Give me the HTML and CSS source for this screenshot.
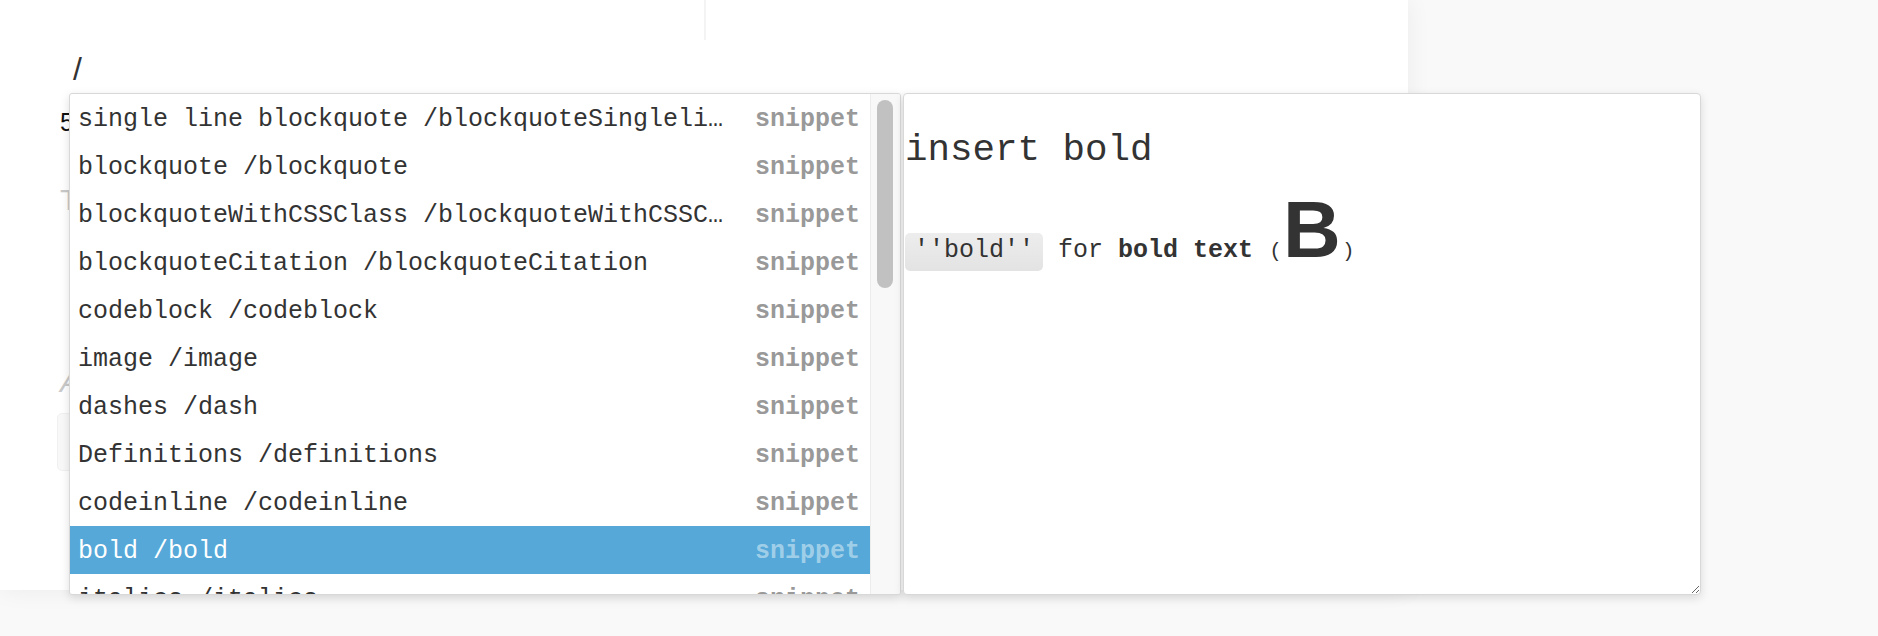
FILE: index.html
```html
<!DOCTYPE html>
<html lang="en">
<head>
<meta charset="utf-8">
<title>Snippet autocomplete</title>
<link rel="stylesheet" href="styles.css">
</head>
<body>
<div class="page">
  <div class="topbar">
    <div class="topbar-left"></div>
    <div class="topbar-right"></div>
  </div>
  <div class="editor">
    <div class="ed-slash">/</div>
    <div class="ed-num">5</div>
    <div class="ed-hint">T</div>
    <div class="ed-hint ed-italic">A</div>
    <div class="ed-box"></div>
  </div>

  <div class="popup">
    <div class="list">
      <div class="rows">
        <div class="row"><span class="name">single line blockquote /blockquoteSingleline</span><span class="kind">snippet</span></div>
        <div class="row"><span class="name">blockquote /blockquote</span><span class="kind">snippet</span></div>
        <div class="row"><span class="name">blockquoteWithCSSClass /blockquoteWithCSSClass</span><span class="kind">snippet</span></div>
        <div class="row"><span class="name">blockquoteCitation /blockquoteCitation</span><span class="kind">snippet</span></div>
        <div class="row"><span class="name">codeblock /codeblock</span><span class="kind">snippet</span></div>
        <div class="row"><span class="name">image /image</span><span class="kind">snippet</span></div>
        <div class="row"><span class="name">dashes /dash</span><span class="kind">snippet</span></div>
        <div class="row"><span class="name">Definitions /definitions</span><span class="kind">snippet</span></div>
        <div class="row"><span class="name">codeinline /codeinline</span><span class="kind">snippet</span></div>
        <div class="row selected"><span class="name">bold /bold</span><span class="kind">snippet</span></div>
        <div class="row"><span class="name">italics /italics</span><span class="kind">snippet</span></div>
      </div>
      <div class="scrollbar"><div class="thumb"></div></div>
    </div>
    <div class="preview">
      <div class="pv-title">insert bold</div>
      <div class="pv-line"><span class="chip">''bold''</span> for <b class="strong">bold text</b> <span class="paren">(</span><span class="big">B</span><span class="paren">)</span></div>
    </div>
  </div>
</div>
</body>
</html>
```

FILE: styles.css
```css
html, body {
  margin: 0;
  padding: 0;
}

body {
  background: #f9f9f9;
  font-family: "Courier New", "Liberation Mono", monospace;
  color: #333;
  width: 1878px;
  height: 636px;
  overflow: hidden;
}

.page {
  position: relative;
  width: 1408px;
  height: 590px;
  background: #fff;
  box-shadow: 0 0 24px rgba(0, 0, 0, 0.06);
}

.topbar {
  display: flex;
  height: 40px;
}

.topbar-left {
  width: 704px;
  border-right: 2px solid #f3f3f3;
}

.topbar-right {
  flex: 1;
}

.editor {
  padding-left: 60px;
}

.ed-slash {
  margin: 11px 0 0 13px;
  font-family: "Liberation Sans", Arial, sans-serif;
  font-size: 32px;
  line-height: 37px;
  color: #333;
}

.ed-num {
  margin-top: 20px;
  font-family: "Liberation Sans", Arial, sans-serif;
  font-size: 25px;
  line-height: 28px;
  color: #111;
}

.ed-hint {
  margin-top: 47px;
  font-family: "Liberation Sans", Arial, sans-serif;
  font-size: 30px;
  line-height: 34px;
  color: #c9c9c9;
}

.ed-italic {
  margin-top: 148px;
  font-style: italic;
}

.ed-box {
  margin: 14px 0 0 -3px;
  width: 200px;
  height: 56px;
  border: 1px solid #f0f0f0;
  border-radius: 5px;
  background: #f8f8f8;
}

/* autocomplete popup */
.popup {
  position: absolute;
  left: 69px;
  top: 93px;
  display: flex;
  gap: 2px;
  height: 502px;
}

.list {
  display: flex;
  width: 832px;
  box-sizing: border-box;
  border: 1px solid #d8d8d8;
  border-radius: 3px;
  background: #fff;
  box-shadow: 0 3px 10px rgba(0, 0, 0, 0.13);
  overflow: hidden;
}

.rows {
  width: 800px;
  overflow: hidden;
}

.row {
  display: flex;
  height: 48px;
  box-sizing: border-box;
  padding: 4px 10px 0 8px;
  font-size: 25px;
  line-height: 44px;
  white-space: nowrap;
}

.name {
  flex: 1;
  min-width: 0;
  overflow: hidden;
  text-overflow: ellipsis;
  color: #333;
}

.kind {
  flex: none;
  margin-left: 28px;
  font-weight: bold;
  color: #999;
}

.row.selected {
  background: #55a8d8;
}

.row.selected .name {
  color: #fff;
}

.row.selected .kind {
  color: rgba(255, 255, 255, 0.45);
}

.scrollbar {
  width: 30px;
  box-sizing: border-box;
  border-left: 1px solid #ececec;
  background: #f8f8f8;
  padding: 6px 0 0 6px;
}

.thumb {
  width: 16px;
  height: 188px;
  border-radius: 8px;
  background: #c1c1c1;
}

/* preview pane */
.preview {
  width: 798px;
  box-sizing: border-box;
  border: 1px solid #d8d8d8;
  border-radius: 4px;
  background: #fff;
  box-shadow: 0 3px 10px rgba(0, 0, 0, 0.13);
  padding: 0 0 0 1px;
  resize: both;
  overflow: auto;
}

.pv-title {
  margin-top: 35px;
  font-size: 37.5px;
  color: #333;
}

.pv-line {
  margin-top: 19px;
  font-size: 25px;
  line-height: 40px;
  color: #333;
  white-space: nowrap;
}

.chip {
  display: inline-block;
  height: 38px;
  box-sizing: border-box;
  padding: 0 9px 2px;
  line-height: 36px;
  border-radius: 5px;
  background: linear-gradient(#ededed, #e3e3e3);
}

.strong {
  font-weight: bold;
}

.paren {
  display: inline-block;
  width: 15px;
  text-align: center;
  font-size: 21px;
}

.big {
  font-family: "Liberation Sans", Arial, sans-serif;
  font-weight: bold;
  font-size: 80px;
  line-height: 80px;
}
```
